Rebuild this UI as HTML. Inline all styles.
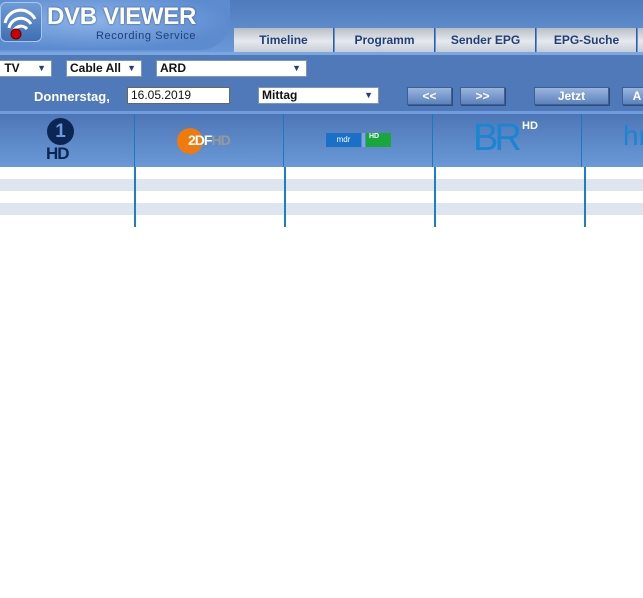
<!DOCTYPE html>
<html><head><meta charset="utf-8"><style>
*{margin:0;padding:0;box-sizing:border-box}
body{width:643px;height:598px;background:#fff;font-family:"Liberation Sans",sans-serif;overflow:hidden;position:relative}
.hdr{position:absolute;left:0;top:0;width:643px;height:53px;background:linear-gradient(#4f7bbd,#6a98d8)}
.logoarea{position:absolute;left:0;top:0;width:230px;height:50px;background:radial-gradient(ellipse at 40% 40%,#8db4e8,#5c8bcf 70%);border-radius:0 0 30px 0}
.icon{position:absolute;left:0;top:2px;width:42px;height:40px;border-radius:6px;background:linear-gradient(#6f9bd6,#3e6fb3);border:1px solid #a9c6ee}
.title{position:absolute;left:47px;top:3px;font-size:24px;font-weight:bold;color:#fff;letter-spacing:-0.3px;text-shadow:0 0 2px #2a4f8f}
.sub{position:absolute;left:96px;top:30px;font-size:11px;color:#1e3f78;letter-spacing:.6px}
.tab{position:absolute;top:28px;height:24px;width:100px;background:linear-gradient(#b9bec6,#e6e9ee 55%,#c7ccd4);color:#1e3f78;font-size:12px;font-weight:bold;text-align:center;line-height:24px;border-right:1px solid #2b5fa0}
.line{position:absolute;left:0;width:643px;height:3px;background:#7aa7e0}
.bar{position:absolute;left:0;top:55px;width:643px;height:58px;background:#4f79b8}
.sel{position:absolute;height:17px;background:#fff;border:1px solid #7c95b9;font-size:12px;font-weight:bold;color:#111;line-height:15px;padding-left:3px}
.sel b{position:absolute;right:5px;top:0;font-size:9px;color:#1e3f78}
.btn{position:absolute;top:87px;height:18px;background:linear-gradient(#9bb5dc,#5c82bd);border:1px solid #3c5f96;box-shadow:1px 1px 0 #2e4b7a;color:#fff;font-size:12px;font-weight:bold;text-align:center;line-height:16px}
.chan{position:absolute;left:0;top:114px;width:643px;height:53px;background:linear-gradient(#4e76b6,#6a99d8)}
.hsep{position:absolute;top:114px;height:53px;width:1px;background:#1e78c0}
.row{position:absolute;left:0;width:643px;height:12px;background:#dfe5ee}
.vsep{position:absolute;top:167px;height:60px;width:2px;background:#1a80c4}
</style></head><body>
<div class="hdr"></div>
<div class="logoarea"></div>
<div class="icon"><svg width="42" height="40"><g fill="none" stroke="#fff" stroke-width="3"><path d="M4 20 A16 16 0 0 1 34 16"/><path d="M8 25 A12 12 0 0 1 30 21"/><path d="M12 30 A8 8 0 0 1 26 26"/></g><circle cx="15" cy="31" r="5" fill="#c00" stroke="#600"/></svg></div>
<div class="title">DVB VIEWER</div>
<div class="sub">Recording Service</div>
<div class="tab" style="left:234px">Timeline</div>
<div class="tab" style="left:335px">Programm</div>
<div class="tab" style="left:436px">Sender EPG</div>
<div class="tab" style="left:537px">EPG-Suche</div>
<div class="tab" style="left:638px"></div>
<div class="bar"></div>
<div class="line" style="top:52px"></div>
<div class="sel" style="left:-3px;top:60px;width:55px">&nbsp;TV<b>▼</b></div>
<div class="sel" style="left:66px;top:60px;width:76px">Cable All<b>▼</b></div>
<div class="sel" style="left:156px;top:60px;width:151px">ARD<b>▼</b></div>
<div style="position:absolute;left:34px;top:89px;font-size:13px;font-weight:bold;color:#fff">Donnerstag,</div>
<div class="sel" style="left:127px;top:87px;width:103px;font-weight:normal;border-color:#666">16.05.2019</div>
<div class="sel" style="left:258px;top:87px;width:121px">Mittag<b>▼</b></div>
<div class="btn" style="left:407px;width:45px">&lt;&lt;</div>
<div class="btn" style="left:460px;width:45px">&gt;&gt;</div>
<div class="btn" style="left:534px;width:75px">Jetzt</div>
<div class="btn" style="left:622px;width:30px">A</div>
<div class="line" style="top:111px;background:#6e9cdc"></div>
<div class="chan"></div>
<div class="hsep" style="left:134px"></div><div class="hsep" style="left:283px"></div><div class="hsep" style="left:432px"></div><div class="hsep" style="left:581px"></div>
<div style="position:absolute;left:47px;top:118px;width:27px;height:27px;border-radius:50%;background:#0c2552;color:#6a99d8;font-size:19px;font-weight:bold;text-align:center;line-height:27px">1</div>
<div style="position:absolute;left:46px;top:144px;font-size:17px;font-weight:bold;color:#0c2552;letter-spacing:-1px">HD</div>
<div style="position:absolute;left:177px;top:128px;width:26px;height:26px;border-radius:50%;background:#f07a0c"></div>
<div style="position:absolute;left:188px;top:132px;font-size:14px;font-weight:bold;color:#fff;letter-spacing:-1px">2DF<span style="color:#999">HD</span></div>
<div style="position:absolute;left:326px;top:133px;width:35px;height:14px;background:#1a6fc6;color:#fff;font-size:8px;line-height:14px;text-align:center">mdr</div>
<div style="position:absolute;left:362px;top:133px;width:3px;height:14px;background:#7fa7dc"></div>
<div style="position:absolute;left:366px;top:133px;width:25px;height:14px;background:#1aa63a;color:#fff;font-size:7px;font-weight:bold;padding-left:3px">HD</div>
<div style="position:absolute;left:473px;top:117px;font-size:38px;color:#1a85d0;letter-spacing:-4px">BR</div>
<div style="position:absolute;left:522px;top:120px;font-size:11px;font-weight:bold;color:#fff">HD</div>
<div style="position:absolute;left:623px;top:120px;font-size:28px;color:#1a85d0">hr</div>
<div class="row" style="top:179px"></div>
<div class="row" style="top:203px"></div>
<div class="vsep" style="left:134px"></div><div class="vsep" style="left:284px"></div><div class="vsep" style="left:434px"></div><div class="vsep" style="left:584px"></div>
</body></html>
